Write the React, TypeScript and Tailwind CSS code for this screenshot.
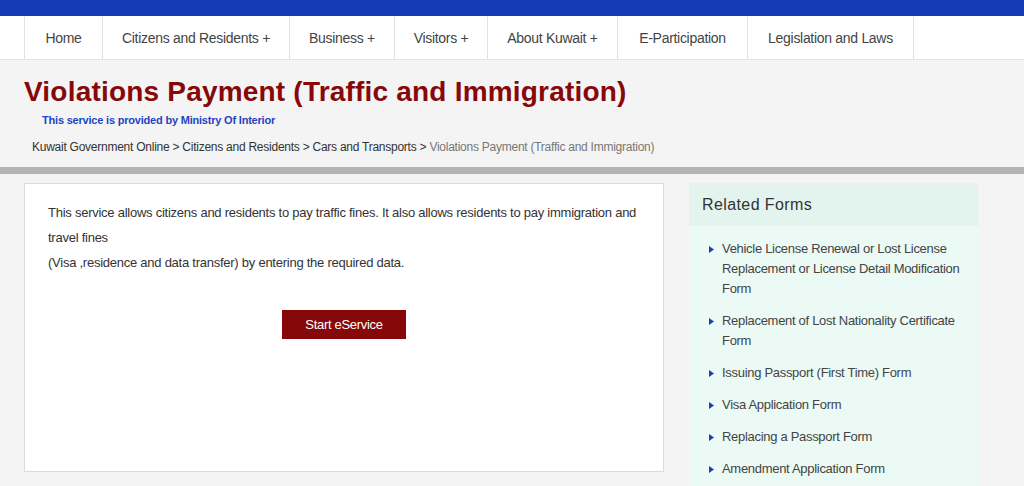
const navItems = [
	{ label: 'Home', w: 'w-[78px]' },
	{ label: 'Citizens and Residents +', w: 'w-[187px]' },
	{ label: 'Business +', w: 'w-[105px]' },
	{ label: 'Visitors +', w: 'w-[93px]' },
	{ label: 'About Kuwait +', w: 'w-[130px]' },
	{ label: 'E-Participation', w: 'w-[130px]' },
	{ label: 'Legislation and Laws', w: 'w-[167px]' },
];

const relatedForms = [
	'Vehicle License Renewal or Lost License Replacement or License Detail Modification Form',
	'Replacement of Lost Nationality Certificate Form',
	'Issuing Passport (First Time) Form',
	'Visa Application Form',
	'Replacing a Passport Form',
	'Amendment Application Form',
];

const App = () => {
	return (
		<div className="min-h-[486px] bg-[#f4f4f4] font-['Liberation_Sans',Arial,sans-serif] overflow-hidden">
			{/* top strip */}
			<div className="h-[16px] bg-[#143cb6]" />

			{/* main nav */}
			<nav className="h-[44px] bg-white border-b border-[#e2e2e2] flex pl-[24px]">
				{navItems.map((item) => (
					<div
						key={item.label}
						className={`${item.w} h-full flex items-center justify-center pt-[2px] border-l border-[#e2e2e2] last:border-r text-[14px] tracking-[-0.3px] text-[#444]`}>
						{item.label}
					</div>
				))}
			</nav>

			{/* page heading */}
			<div className="pl-[24px] pt-[16px]">
				<h1 className="text-[28px] leading-[32px] font-bold tracking-[0.2px] text-[#870808]">
					Violations Payment (Traffic and Immigration)
				</h1>
				<p className="pl-[18px] mt-[5px] text-[11px] leading-[14px] font-bold tracking-[-0.2px] text-[#1f44c4]">
					This service is provided by Ministry Of Interior
				</p>
				<p className="pl-[8px] mt-[12px] text-[12px] leading-[16px] tracking-[-0.25px] text-[#333]">
					Kuwait Government Online &gt; Citizens and Residents &gt; Cars and Transports &gt;{' '}
					<span className="text-[#777]">Violations Payment (Traffic and Immigration)</span>
				</p>
			</div>

			<div className="mt-[12px] h-[7px] bg-[#b4b4b4]" />

			{/* content */}
			<div className="flex gap-[25px] pl-[24px] pt-[9px]">
				<div className="w-[640px] h-[289px] bg-white border border-[#dcdcdc] px-[23px] pt-[16px]">
					<p className="text-[13px] leading-[25px] tracking-[-0.25px] text-[#333]">
						This service allows citizens and residents to pay traffic fines. It also allows residents to pay immigration and
						travel fines
						<br />
						(Visa ,residence and data transfer) by entering the required data.
					</p>
					<div className="flex justify-center mt-[35px]">
						<button className="w-[124px] h-[29px] bg-[#870808] text-white text-[13px] tracking-[-0.3px]">
							Start eService
						</button>
					</div>
				</div>

				<aside className="w-[289px] bg-[#ebfaf5] self-start">
					<div className="h-[43px] bg-[#e2f4ed] flex items-center px-[13px]">
						<h2 className="text-[16px] tracking-[0.4px] text-[#333]">Related Forms</h2>
					</div>
					<ul className="pt-[13px] pb-[12px] pl-[20px] pr-[12px] flex flex-col gap-[12px]">
						{relatedForms.map((form) => (
							<li key={form} className="flex text-[13px] leading-[20px] tracking-[-0.3px] text-[#444]">
								<span className="w-[13px] shrink-0 pt-[7px]">
									<svg width="5" height="7" viewBox="0 0 5 7">
										<path d="M0 0 L5 3.5 L0 7 Z" fill="#1f3fae" />
									</svg>
								</span>
								<span>{form}</span>
							</li>
						))}
					</ul>
				</aside>
			</div>
		</div>
	);
};

export default App;
